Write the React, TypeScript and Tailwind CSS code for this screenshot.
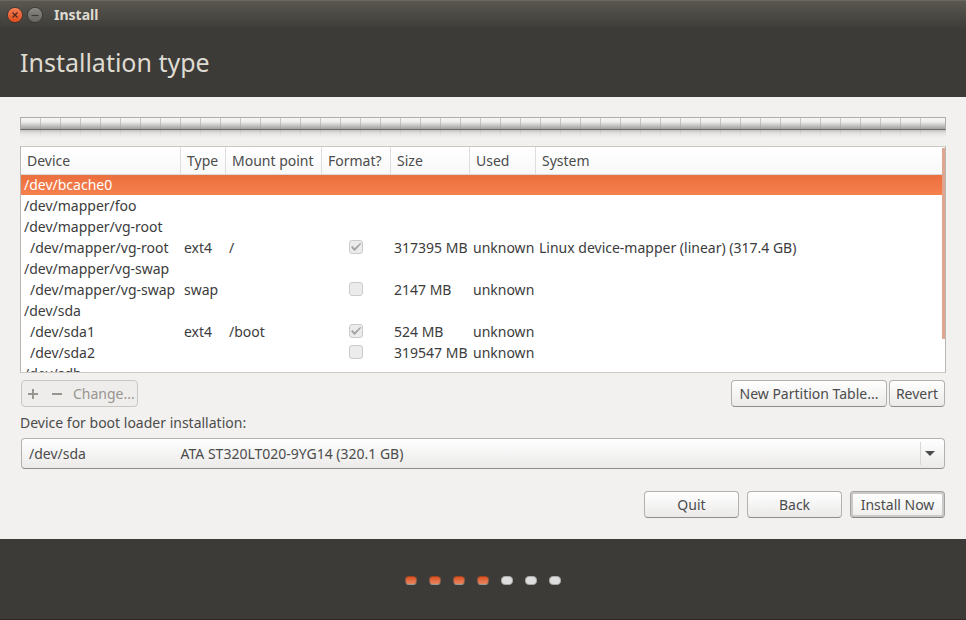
import React from "react";

type Row = {
  device: string;
  child?: boolean;
  type?: string;
  mount?: string;
  format?: boolean;
  size?: string;
  used?: string;
  system?: string;
};

const rows: Row[] = [
  { device: "/dev/bcache0" },
  { device: "/dev/mapper/foo" },
  { device: "/dev/mapper/vg-root" },
  { device: "/dev/mapper/vg-root", child: true, type: "ext4", mount: "/", format: true, size: "317395 MB", used: "unknown", system: "Linux device-mapper (linear) (317.4 GB)" },
  { device: "/dev/mapper/vg-swap" },
  { device: "/dev/mapper/vg-swap", child: true, type: "swap", format: false, size: "2147 MB", used: "unknown" },
  { device: "/dev/sda" },
  { device: "/dev/sda1", child: true, type: "ext4", mount: "/boot", format: true, size: "524 MB", used: "unknown" },
  { device: "/dev/sda2", child: true, format: false, size: "319547 MB", used: "unknown" },
  { device: "/dev/sdb" },
];

const headers = ["Device", "Type", "Mount point", "Format?", "Size", "Used", "System"];

const buttonClass =
  "h-[27px] rounded border border-[#b3b1ad] border-b-[#8f8d89] bg-linear-to-b from-white to-[#ebeae9] text-center whitespace-nowrap";

function FormatBox({ checked, label }: { checked: boolean; label: string }) {
  return (
    <span className="grid h-[18px] place-items-center">
      <input
        type="checkbox"
        disabled
        checked={checked}
        readOnly
        aria-label={label}
        className="col-start-1 row-start-1 size-3.5 appearance-none rounded-[3px] border border-[#cbcbca] bg-[#ebebeb]"
      />
      {checked && (
        <svg viewBox="0 0 14 14" className="pointer-events-none col-start-1 row-start-1 size-3.5" aria-hidden="true">
          <path d="M2 7.2 3.6 6.1 5.5 8.3 11.2 3 12.2 3.8 6 10.8H5Z" fill="#a3a3a2" />
        </svg>
      )}
    </span>
  );
}

function WindowButton({ close }: { close?: boolean }) {
  return (
    <button type="button" aria-label={close ? "Close" : "Minimize"} className="size-4">
      <svg viewBox="0 0 16 16" className="size-4">
        <defs>
          <linearGradient id={close ? "closeFill" : "minFill"} x1="0" y1="0" x2="0" y2="1">
            <stop offset="0" stopColor={close ? "#f58058" : "#8c8a84"} />
            <stop offset="1" stopColor={close ? "#df4a18" : "#65635d"} />
          </linearGradient>
        </defs>
        <circle cx="8" cy="8" r="7.6" fill={close ? "url(#closeFill)" : "url(#minFill)"} stroke="#34332e" strokeWidth="0.8" />
        {close ? (
          <path d="M5.5 5.5 10.5 10.5M10.5 5.5 5.5 10.5" stroke="#4b2a1d" strokeWidth="1.2" />
        ) : (
          <path d="M4.5 8.5H11.5" stroke="#3b3a35" strokeWidth="1.1" />
        )}
      </svg>
    </button>
  );
}

export default function App() {
  return (
    <div className="flex h-screen min-h-[480px] flex-col bg-[#f2f1f0] font-['Noto_Sans',sans-serif] text-sm leading-5 text-[#4c4c4c]">
      <header className="bg-[#3c3b37] text-[#dfdbd2]">
        <div className="flex h-7 items-center gap-1 border-t border-[#6a675e] bg-linear-to-b from-[#595750] to-[#3e3d39] pl-[7px]">
          <WindowButton close />
          <WindowButton />
          <span className="pl-[7px] text-sm font-bold">Install</span>
        </div>
        <h1 className="px-5 pt-[18px] pb-[19px] text-[25px] leading-8">Installation type</h1>
      </header>

      <main className="flex min-h-0 flex-1 flex-col px-5 pt-5 pb-[21px]">
        <div aria-hidden="true">
          <div className="h-[13px] border border-[#adaca9] border-b-[#6c6b69] bg-linear-to-b from-[#f6f6f5] via-[#ededec] via-35% to-[#a0a09d]">
            <div className="mr-2 h-full bg-[repeating-linear-gradient(90deg,transparent_0_19px,#a0a09e80_19px_20px)]" />
          </div>
          <div className="h-2 bg-linear-to-b from-[#c2c1bf] via-[#e4e3e2] via-40% to-[#f2f1f0]">
            <div className="mr-2 ml-px h-full bg-[repeating-linear-gradient(90deg,transparent_0_19px,#a0a09e40_19px_20px)] mask-b-from-0%" />
          </div>
        </div>

        <div className="relative mt-2 min-h-0 flex-1 overflow-hidden border border-[#bbb7b1] border-t-[#ccc8c2] border-b-[#ccc8c2] bg-white">
          <table className="w-full table-fixed border-collapse text-left whitespace-nowrap text-[#3c3c3c]">
            <colgroup>
              <col className="w-[160px]" />
              <col className="w-[45px]" />
              <col className="w-[96px]" />
              <col className="w-[69px]" />
              <col className="w-[79px]" />
              <col className="w-[66px]" />
              <col />
            </colgroup>
            <thead>
              <tr className="h-7 bg-linear-to-b from-white to-[#f8f8f8] text-[#4c4c4c] shadow-[inset_0_-1px_#dad8d6]">
                {headers.map((h) => (
                  <th key={h} scope="col" className="p-0 pl-1.5 font-normal shadow-[inset_-1px_0_#dfdedc] last:shadow-none">
                    {h}
                  </th>
                ))}
              </tr>
            </thead>
            <tbody>
              {rows.map((r, i) => (
                <tr
                  key={i}
                  aria-selected={i === 0}
                  className="h-[21px] align-top aria-selected:bg-linear-to-b aria-selected:from-[#eb6f3d] aria-selected:to-[#f78150] aria-selected:text-white aria-selected:shadow-[inset_0_-1px_white]"
                >
                  <td className={r.child ? "p-0 pl-[9px]" : "p-0 pl-[3px]"}>{r.device}</td>
                  <td className="p-0 pl-[3px]">{r.type}</td>
                  <td className="p-0 pl-[3px]">{r.mount}</td>
                  <td className="p-0 pr-px">
                    {r.format !== undefined && <FormatBox checked={r.format} label={`Format ${r.device}`} />}
                  </td>
                  <td className="p-0 pl-[3px]">{r.size}</td>
                  <td className="p-0 pl-[3px]">{r.used}</td>
                  <td className="p-0 pl-[3px]">{r.system}</td>
                </tr>
              ))}
            </tbody>
          </table>
          <div className="absolute top-px right-0 h-[85%] w-[3px] bg-[#dfa58f]" />
        </div>

        <div className="mt-[7px] flex items-center justify-between px-px">
          <div className="flex h-[27px] items-center rounded border border-[#c8c7c6] bg-[#eeedec] text-[#98958f]">
            <button type="button" disabled aria-label="Add partition" className="flex h-full w-[23px] items-center pl-1.5">
              <svg viewBox="0 0 10 10" className="size-2.5"><path d="M5 0V10M0 5H10" stroke="currentColor" strokeWidth="2" /></svg>
            </button>
            <button type="button" disabled aria-label="Remove partition" className="flex h-full w-6 items-center pl-[7px]">
              <svg viewBox="0 0 10 10" className="size-2.5"><path d="M0 5H10" stroke="currentColor" strokeWidth="2" /></svg>
            </button>
            <button type="button" disabled className="h-full pr-0.5 pl-1">Change...</button>
          </div>
          <div className="flex gap-0.5">
            <button type="button" className={`${buttonClass} w-[156px]`}>New Partition Table...</button>
            <button type="button" className={`${buttonClass} w-14`}>Revert</button>
          </div>
        </div>

        <label htmlFor="bootloader" className="mt-1.5 pb-[5px]">Device for boot loader installation:</label>
        <div className="relative mx-px">
          <select
            id="bootloader"
            className="h-[31px] w-full appearance-none rounded border border-[#b3b1ad] border-b-[#8f8d89] bg-linear-to-b from-white to-[#ebeae9] px-[7px]"
          >
            <option>{"/dev/sda" + "\u00a0".repeat(26) + "ATA ST320LT020-9YG14 (320.1 GB)"}</option>
          </select>
          <span className="pointer-events-none absolute inset-y-1 right-0 flex w-[25px] items-center border-l border-[#d8d7d5] pl-1">
            <svg viewBox="0 0 10 5" className="h-[5px] w-2.5"><path d="M0 0H10L5 5Z" fill="#4c4c4c" /></svg>
          </span>
        </div>

        <div className="mt-[22px] flex justify-end gap-2 px-px">
          <button type="button" className={`${buttonClass} w-[95px]`}>Quit</button>
          <button type="button" className={`${buttonClass} w-[95px]`}>Back</button>
          <button
            type="button"
            className="h-[27px] w-[95px] rounded border border-[#a3a19d] border-b-[#858380] bg-linear-to-b from-white to-[#efeeed] text-center whitespace-nowrap shadow-[inset_0_0_0_2px_#cbcac8]"
          >
            Install Now
          </button>
        </div>
      </main>

      <footer className="flex h-[81px] items-center justify-center gap-3 border-b border-[#312826] bg-[#3c3b37] pt-0.5">
        {[0, 1, 2, 3, 4, 5, 6].map((n) => (
          <span
            key={n}
            className={
              n < 4
                ? "h-[9px] w-3 rounded border border-t-[#a5421d] border-x-[#8c5b46] border-b-[#a09a92] bg-linear-to-b from-[#df5220] to-[#e6855f]"
                : "h-[9px] w-3 rounded border border-[#aaa9a6] bg-[#dedede]"
            }
          />
        ))}
      </footer>
    </div>
  );
}
